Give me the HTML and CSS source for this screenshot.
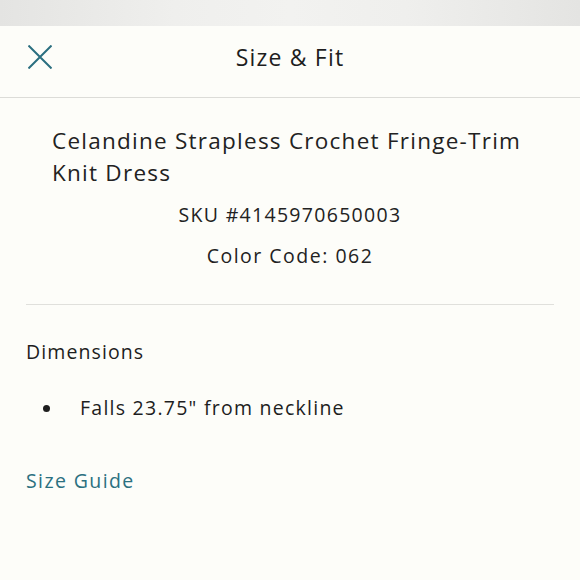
FILE: index.html
```html
<!DOCTYPE html>
<html lang="en">
<head>
<meta charset="utf-8">
<title>Size &amp; Fit</title>
<link rel="stylesheet" href="styles.css">
</head>
<body>
<div class="backdrop"></div>
<div class="sheet">
  <header class="bar">
    <button class="close" aria-label="Close">
      <svg width="24" height="24" viewBox="0 0 24 24"><path d="M0.5 0.5 L23.5 23.5 M23.5 0.5 L0.5 23.5" stroke="#2b6f80" stroke-width="2" fill="none"/></svg>
    </button>
    <h1 class="title">Size &amp; Fit</h1>
    <span></span>
  </header>
  <section class="product">
    <h2 class="name">Celandine Strapless Crochet Fringe-Trim Knit Dress</h2>
    <p class="meta sku">SKU #4145970650003</p>
    <p class="meta color">Color Code: 062</p>
  </section>
  <hr class="divider">
  <section class="dims">
    <h3 class="dims-title">Dimensions</h3>
    <ul class="dims-list">
      <li>Falls 23.75" from neckline</li>
    </ul>
    <a class="guide" href="#">Size Guide</a>
  </section>
</div>
</body>
</html>
```

FILE: styles.css
```css
html, body {
  margin: 0;
  padding: 0;
  height: 100%;
  background: #fdfdf9;
}
body {
  font-family: "Open Sans", "Noto Sans", sans-serif;
  color: #1e1e1e;
  width: 580px;
  overflow: hidden;
}
.backdrop {
  height: 26px;
  background: linear-gradient(90deg, #e4e4e2 0%, #efefed 30%, #f2f2f0 50%, #efefed 70%, #e4e4e2 100%);
}
.sheet {
  background: #fdfdf9;
  min-height: 554px;
}
.bar {
  height: 61px;
  padding-bottom: 10px;
  border-bottom: 1px solid #dcdcd8;
  display: grid;
  grid-template-columns: 1fr auto 1fr;
  align-items: center;
}
.close {
  justify-self: start;
  margin-left: 28px;
  padding: 0;
  border: 0;
  background: none;
  width: 24px;
  height: 24px;
  display: flex;
}
.title {
  margin: 0;
  font-size: 23px;
  font-weight: 400;
  letter-spacing: 1.2px;
  line-height: 30px;
}
.product {
  padding: 27px 26px 0 52px;
}
.name {
  margin: 0;
  font-size: 22.5px;
  font-weight: 400;
  line-height: 32px;
  letter-spacing: 1.25px;
  color: #222;
}
.meta {
  margin: 12px 0 0;
  text-align: center;
  padding-right: 26px;
  font-size: 19.5px;
  line-height: 28px;
  letter-spacing: 1.3px;
  color: #222;
}
.color {
  margin-top: 13px;
  letter-spacing: 1.5px;
}
.divider {
  margin: 34px 26px 0;
  border: 0;
  border-top: 1px solid #e0e0dc;
  height: 0;
}
.dims {
  padding: 0 26px;
}
.dims-title {
  margin: 33px 0 0;
  font-size: 19.5px;
  font-weight: 400;
  line-height: 28px;
  letter-spacing: 1.1px;
}
.dims-list {
  list-style: none;
  margin: 28px 0 0;
  padding: 0;
}
.dims-list li {
  display: flex;
  align-items: center;
  font-size: 19.5px;
  line-height: 28px;
  letter-spacing: 1.25px;
}
.dims-list li::before {
  content: "";
  width: 7px;
  height: 7px;
  border-radius: 50%;
  background: #1e1e1e;
  margin-left: 17px;
  margin-right: 30px;
}
.guide {
  display: block;
  margin-top: 45px;
  font-size: 19.5px;
  line-height: 28px;
  letter-spacing: 1.4px;
  color: #2b7080;
  text-decoration: none;
}
```
